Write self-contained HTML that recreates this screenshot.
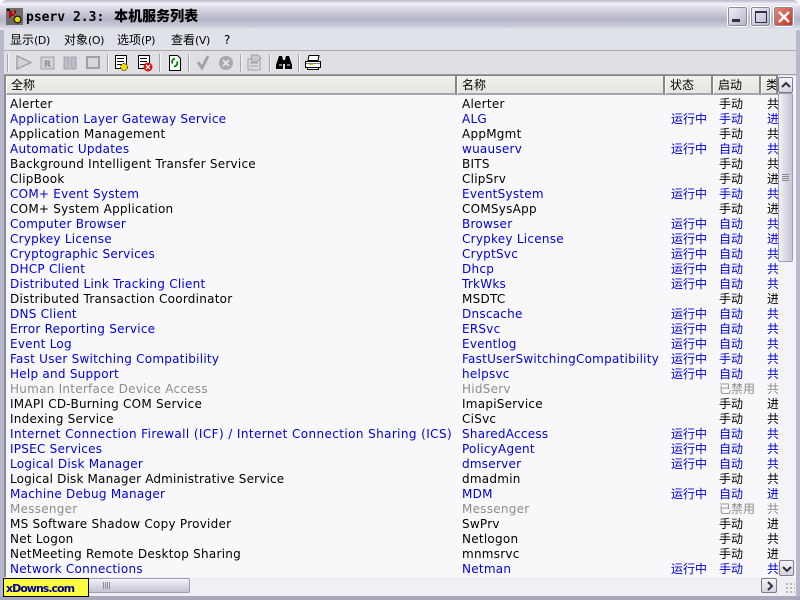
<!DOCTYPE html>
<html><head><meta charset="utf-8">
<style>
html,body{margin:0;padding:0;width:800px;height:600px;overflow:hidden;background:#fff}
*{box-sizing:border-box}
body{position:relative;font-family:"DejaVu Sans","WenQuanYi Zen Hei","Noto Sans CJK SC",sans-serif;font-size:12px;color:#000}
.a{position:absolute}
#win{position:absolute;left:0;top:0;width:800px;height:600px;background:#e0e2ea;border-radius:7px 7px 0 0;overflow:hidden}
#tb{left:0;top:0;width:800px;height:30px;background:linear-gradient(#b8b8cc 0,#f0f0f6 12%,#d8d8e4 30%,#b4b4c8 65%,#c8c8d8 85%,#e8e8f0 100%)}
#lb{left:0;top:30px;width:4px;height:570px;background:#b8b8cc}
#rb{left:796px;top:30px;width:4px;height:570px;background:#b8b8cc}
#bb{left:0;top:596px;width:800px;height:4px;background:#a8a8bc}
#title{left:26px;top:7px;font-weight:bold;font-size:13px;color:#000;white-space:pre;line-height:18px;font-family:"DejaVu Sans Mono","WenQuanYi Zen Hei",monospace}
#title b{font-size:14px;font-family:"WenQuanYi Zen Hei","Noto Sans CJK SC",sans-serif;margin-left:2px}
.wb{width:21px;height:21px;border-radius:3px;border:1px solid #fff;box-shadow:0 0 0 1px #8888a0 inset}
#menu{left:4px;top:30px;width:792px;height:21px;background:#e0e2ea;border-bottom:1px solid #a8a8b4}
.m{top:33px;height:15px;line-height:15px;white-space:pre;font-size:12px}
.m i{font-style:normal;font-size:11px;letter-spacing:-.4px}
#tools{left:4px;top:51px;width:792px;height:24px;background:#e0e0e4;border-bottom:1px solid #9c9ca4}
.sep{top:54px;width:1px;height:18px;background:#a4a4b0;box-shadow:1px 0 0 #f6f6f8}
#hdr{left:4px;top:75px;width:774px;height:20px;background:#e4e4e0;border-top:1px solid #808088;border-left:2px solid #8c8c94}
.h{top:76px;height:19px;background:linear-gradient(#f2f2ec,#e6e6e0);border-left:1px solid #fff;border-right:2px solid #84848c;border-bottom:2px solid #a4a4ac;padding-left:4px;line-height:19px;font-size:12px;overflow:hidden;white-space:nowrap}
#list{left:4px;top:95px;width:774px;height:482px;background:#f8f8fb;border-left:2px solid #8c8c94;overflow:hidden}
.r{position:absolute;left:-6px;width:781px;height:15px;line-height:15px;white-space:nowrap;font-size:12px;margin-top:1px}
.r span{position:absolute;top:0;white-space:pre}
.r .c1{left:10px;letter-spacing:.25px}.r .c2{left:462px;letter-spacing:.25px}.r .c3{left:671px}.r .c4{left:719px}.r .c5{left:767px;width:12px;overflow:hidden}
.b{color:#0000dc}.g{color:#8c8c8c}
.btn{border:1px solid #7c7c88;background:linear-gradient(#f4f4f8,#d4d4de);border-radius:2px}
</style></head><body>
<div id="win">
<div class="a" id="tb"></div>
<div class="a" id="lb"></div><div class="a" id="rb"></div><div class="a" id="bb"></div>
<svg class="a" style="left:6px;top:8px" width="17" height="17" viewBox="0 0 17 17"><rect width="17" height="17" fill="#6c6c6c"/><path d="M3 3h3v3h2v2H5v2H3zM8 2h2v4H8z" fill="#c00000"/><circle cx="11.500" cy="11.500" r="3.400" fill="#e8d800" stroke="#000"/><rect x="1" y="1" width="3" height="2" fill="#111"/></svg>
<div class="a" id="title">pserv 2.3: <b>本机服务列表</b></div>
<div class="a wb" style="left:727px;top:6px;background:linear-gradient(135deg,#f4f4f8,#b0b0c8)"><div class="a" style="left:4px;top:12px;width:8px;height:3px;background:#303048"></div></div>
<div class="a wb" style="left:750px;top:6px;background:linear-gradient(135deg,#f4f4f8,#b0b0c8)"><div class="a" style="left:4px;top:4px;width:12px;height:12px;border:1px solid #303048;border-top-width:2px"></div></div>
<div class="a wb" style="left:773px;top:6px;background:linear-gradient(135deg,#e89080,#c03020)"><svg class="a" style="left:3px;top:3px" width="14" height="14"><path d="M2 2L12 12M12 2L2 12" stroke="#fff" stroke-width="2.400"/></svg></div>

<div class="a" id="menu"></div>
<div class="a m" style="left:10px">显示<i>(D)</i></div>
<div class="a m" style="left:64px">对象<i>(O)</i></div>
<div class="a m" style="left:117px">选项<i>(P)</i></div>
<div class="a m" style="left:171px">查看<i>(V)</i></div>
<div class="a m" style="left:224px">?</div>

<div class="a" id="tools"></div>
<div class="a sep" style="left:7px"></div>
<div class="a sep" style="left:107px"></div>
<div class="a sep" style="left:159px"></div>
<div class="a sep" style="left:188px"></div>
<div class="a sep" style="left:240px"></div>
<div class="a sep" style="left:269px"></div>
<div class="a sep" style="left:298px"></div>
<svg class="a" style="left:0;top:51px" width="330" height="24" viewBox="0 0 330 24">
<g fill="#bcbcc4" stroke="#a0a0a8">
<path d="M17 5v13l14-6.500z" fill="#d4d4d8" stroke-width="1.500"/>
<rect x="41" y="6" width="13" height="12" fill="#d0d0d6"/>
<rect x="64" y="6" width="5" height="12"/><rect x="71" y="6" width="5" height="12"/>
<rect x="87" y="6" width="12" height="11" fill="#d8d8dc" stroke-width="2"/>
</g>
<text x="44" y="16" font-size="9" font-weight="bold" fill="#909098" font-family="DejaVu Sans">R</text>
<path d="M115.500 4.500h11v13h-11z" fill="#fff" stroke="#000"/><path d="M117 7.500h7M117 10.500h7M117 13.500h5" stroke="#000"/>
<circle cx="124" cy="16" r="3.500" fill="#f0e000" stroke="#404000" stroke-dasharray="2 1"/>
<path d="M138.500 4.500h11v13h-11z" fill="#fff" stroke="#000"/><path d="M140 7.500h7M140 10.500h7M140 13.500h5" stroke="#000"/>
<circle cx="148" cy="16" r="4.500" fill="#e01010"/><path d="M146 14l4 4M150 14l-4 4" stroke="#fff" stroke-width="1.300"/>
<path d="M169.500 4.500h8l3 3v12h-11z" fill="#fff" stroke="#000"/><path d="M175 7.500a3.500 3.500 0 0 0-2.500 5M174 15.500a3.500 3.500 0 0 0 3-5" fill="none" stroke="#008000" stroke-width="1.800"/>
<path d="M198 11l4 6 6-12" fill="none" stroke="#a0a0a8" stroke-width="2.800"/>
<circle cx="226" cy="12" r="7" fill="#a8a8b0"/><path d="M223 9l6 6M229 9l-6 6" stroke="#e8e8ec" stroke-width="1.800"/>
<path d="M248 8h12v11h-12z" fill="#dcdce0" stroke="#a0a0a8"/><path d="M251 4l7 0 3 3-4 4h-5z" fill="#c8c8d0" stroke="#a0a0a8"/><path d="M250 12h8M250 15h8" stroke="#a0a0a8"/>
<path d="M279 5h3l1 4h2l1-4h3l3 9v4h-7v-5h-2v5h-7v-4z" fill="#000"/><path d="M279 14h3M287 14h3" stroke="#fff"/>
<path d="M309 4.500h10l-1 5h-10zM305.500 10.500h15v6h-15zM307.500 16.500h11v2h-11z" fill="#fff" stroke="#000"/><path d="M309 13.500h4" stroke="#d8c800"/><path d="M306 12.500h14" stroke="#808080"/>
</svg>

<div class="a" id="hdr"></div>
<div class="a h" style="left:6px;width:451px">全称</div>
<div class="a h" style="left:457px;width:208px">名称</div>
<div class="a h" style="left:665px;width:48px">状态</div>
<div class="a h" style="left:713px;width:48px">启动</div>
<div class="a h" style="left:761px;width:17px">类</div>

<div class="a" id="list">
<div class="r" style="top:1px"><span class="c1">Alerter</span><span class="c2">Alerter</span><span class="c4">手动</span><span class="c5">共</span></div>
<div class="r b" style="top:16px"><span class="c1" style="letter-spacing:.21px">Application Layer Gateway Service</span><span class="c2">ALG</span><span class="c3">运行中</span><span class="c4">手动</span><span class="c5">进</span></div>
<div class="r" style="top:31px"><span class="c1">Application Management</span><span class="c2">AppMgmt</span><span class="c4">手动</span><span class="c5">共</span></div>
<div class="r b" style="top:46px"><span class="c1">Automatic Updates</span><span class="c2">wuauserv</span><span class="c3">运行中</span><span class="c4">自动</span><span class="c5">共</span></div>
<div class="r" style="top:61px"><span class="c1">Background Intelligent Transfer Service</span><span class="c2">BITS</span><span class="c4">手动</span><span class="c5">共</span></div>
<div class="r" style="top:76px"><span class="c1">ClipBook</span><span class="c2">ClipSrv</span><span class="c4">手动</span><span class="c5">进</span></div>
<div class="r b" style="top:91px"><span class="c1">COM+ Event System</span><span class="c2">EventSystem</span><span class="c3">运行中</span><span class="c4">手动</span><span class="c5">共</span></div>
<div class="r" style="top:106px"><span class="c1">COM+ System Application</span><span class="c2">COMSysApp</span><span class="c4">手动</span><span class="c5">进</span></div>
<div class="r b" style="top:121px"><span class="c1">Computer Browser</span><span class="c2">Browser</span><span class="c3">运行中</span><span class="c4">自动</span><span class="c5">共</span></div>
<div class="r b" style="top:136px"><span class="c1">Crypkey License</span><span class="c2">Crypkey License</span><span class="c3">运行中</span><span class="c4">自动</span><span class="c5">进</span></div>
<div class="r b" style="top:151px"><span class="c1">Cryptographic Services</span><span class="c2">CryptSvc</span><span class="c3">运行中</span><span class="c4">自动</span><span class="c5">共</span></div>
<div class="r b" style="top:166px"><span class="c1">DHCP Client</span><span class="c2">Dhcp</span><span class="c3">运行中</span><span class="c4">自动</span><span class="c5">共</span></div>
<div class="r b" style="top:181px"><span class="c1">Distributed Link Tracking Client</span><span class="c2">TrkWks</span><span class="c3">运行中</span><span class="c4">自动</span><span class="c5">共</span></div>
<div class="r" style="top:196px"><span class="c1">Distributed Transaction Coordinator</span><span class="c2">MSDTC</span><span class="c4">手动</span><span class="c5">进</span></div>
<div class="r b" style="top:211px"><span class="c1">DNS Client</span><span class="c2">Dnscache</span><span class="c3">运行中</span><span class="c4">自动</span><span class="c5">共</span></div>
<div class="r b" style="top:226px"><span class="c1">Error Reporting Service</span><span class="c2">ERSvc</span><span class="c3">运行中</span><span class="c4">自动</span><span class="c5">共</span></div>
<div class="r b" style="top:241px"><span class="c1">Event Log</span><span class="c2">Eventlog</span><span class="c3">运行中</span><span class="c4">自动</span><span class="c5">共</span></div>
<div class="r b" style="top:256px"><span class="c1">Fast User Switching Compatibility</span><span class="c2">FastUserSwitchingCompatibility</span><span class="c3">运行中</span><span class="c4">手动</span><span class="c5">共</span></div>
<div class="r b" style="top:271px"><span class="c1">Help and Support</span><span class="c2">helpsvc</span><span class="c3">运行中</span><span class="c4">自动</span><span class="c5">共</span></div>
<div class="r g" style="top:286px"><span class="c1">Human Interface Device Access</span><span class="c2">HidServ</span><span class="c4">已禁用</span><span class="c5">共</span></div>
<div class="r" style="top:301px"><span class="c1">IMAPI CD-Burning COM Service</span><span class="c2">ImapiService</span><span class="c4">手动</span><span class="c5">进</span></div>
<div class="r" style="top:316px"><span class="c1">Indexing Service</span><span class="c2">CiSvc</span><span class="c4">手动</span><span class="c5">共</span></div>
<div class="r b" style="top:331px"><span class="c1" style="letter-spacing:.4px">Internet Connection Firewall (ICF) / Internet Connection Sharing (ICS)</span><span class="c2">SharedAccess</span><span class="c3">运行中</span><span class="c4">自动</span><span class="c5">共</span></div>
<div class="r b" style="top:346px"><span class="c1">IPSEC Services</span><span class="c2">PolicyAgent</span><span class="c3">运行中</span><span class="c4">自动</span><span class="c5">共</span></div>
<div class="r b" style="top:361px"><span class="c1">Logical Disk Manager</span><span class="c2">dmserver</span><span class="c3">运行中</span><span class="c4">自动</span><span class="c5">共</span></div>
<div class="r" style="top:376px"><span class="c1" style="letter-spacing:.16px">Logical Disk Manager Administrative Service</span><span class="c2">dmadmin</span><span class="c4">手动</span><span class="c5">共</span></div>
<div class="r b" style="top:391px"><span class="c1">Machine Debug Manager</span><span class="c2">MDM</span><span class="c3">运行中</span><span class="c4">自动</span><span class="c5">进</span></div>
<div class="r g" style="top:406px"><span class="c1">Messenger</span><span class="c2">Messenger</span><span class="c4">已禁用</span><span class="c5">共</span></div>
<div class="r" style="top:421px"><span class="c1">MS Software Shadow Copy Provider</span><span class="c2">SwPrv</span><span class="c4">手动</span><span class="c5">进</span></div>
<div class="r" style="top:436px"><span class="c1">Net Logon</span><span class="c2">Netlogon</span><span class="c4">手动</span><span class="c5">共</span></div>
<div class="r" style="top:451px"><span class="c1">NetMeeting Remote Desktop Sharing</span><span class="c2">mnmsrvc</span><span class="c4">手动</span><span class="c5">进</span></div>
<div class="r b" style="top:466px"><span class="c1">Network Connections</span><span class="c2">Netman</span><span class="c3">运行中</span><span class="c4">手动</span><span class="c5">共</span></div>
</div>

<!-- vertical scrollbar -->
<div class="a" style="left:778px;top:76px;width:18px;height:501px;background:#f4f4f8"></div>
<div class="a btn" style="left:778px;top:77px;width:15px;height:16px"><svg class="a" style="left:2px;top:3px" width="10" height="8"><path d="M1 6l4-4 4 4" fill="none" stroke="#303040" stroke-width="2"/></svg></div>
<div class="a" style="left:778px;top:93px;width:15px;height:169px;background:linear-gradient(90deg,#f2f2f6,#d0d0de 70%,#c4c4d4);border:1px solid #9c9cac;border-radius:2px"><div class="a" style="left:3px;top:80px;width:7px;height:7px;background:repeating-linear-gradient(#8c8c98 0 1px,transparent 1px 2px)"></div></div>
<div class="a btn" style="left:779px;top:560px;width:15px;height:16px"><svg class="a" style="left:2px;top:4px" width="10" height="8"><path d="M1 2l4 4 4-4" fill="none" stroke="#303040" stroke-width="2"/></svg></div>

<!-- horizontal scrollbar -->
<div class="a" style="left:4px;top:577px;width:792px;height:19px;background:#f0f0f4"></div>
<div class="a" style="left:6px;top:578px;width:184px;height:15px;background:linear-gradient(#f2f2f6,#d0d0de 70%,#c4c4d4);border:1px solid #9c9cac;border-radius:2px"><div class="a" style="left:96px;top:3px;width:7px;height:7px;background:repeating-linear-gradient(90deg,#8c8c98 0 1px,transparent 1px 2px)"></div></div>
<div class="a btn" style="left:761px;top:578px;width:16px;height:15px"><svg class="a" style="left:4px;top:2px" width="8" height="10"><path d="M2 1l4 4-4 4" fill="none" stroke="#303040" stroke-width="2"/></svg></div>
<div class="a" style="left:785px;top:582px;width:10px;height:12px;background:radial-gradient(#b4b4a8 1px,transparent 1.200px) 0 0/4px 4px"></div>

<!-- watermark -->
<div class="a" style="left:3px;top:578px;width:86px;height:19px;background:#fcfc40;border:1px solid #000;font-weight:bold;font-size:11px;line-height:19px;padding-left:2px;color:#000090;white-space:nowrap;overflow:hidden;font-family:'DejaVu Sans',sans-serif;letter-spacing:-1px">xDowns.com</div>
</div>
</body></html>
